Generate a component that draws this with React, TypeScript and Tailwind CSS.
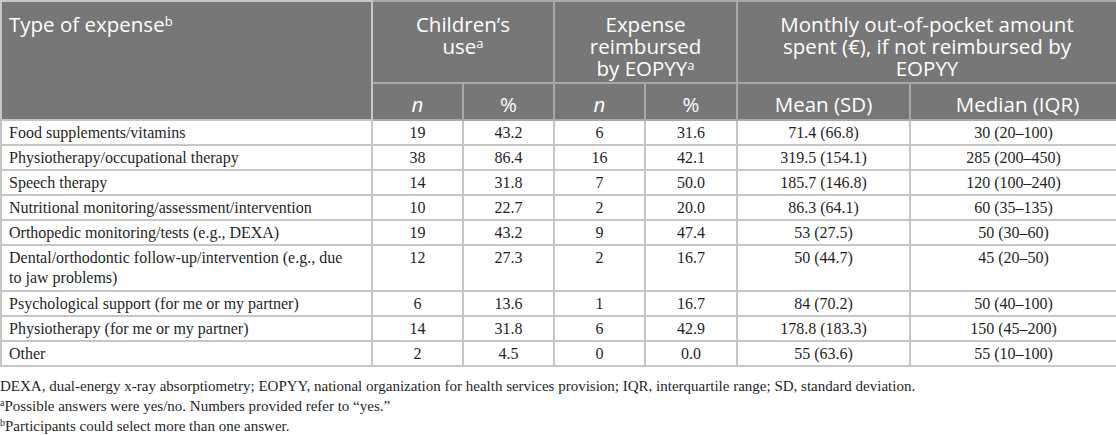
import React from "react";

type Row = {
  label: React.ReactNode;
  n1: string;
  p1: string;
  n2: string;
  p2: string;
  mean: string;
  median: string;
  tall?: boolean;
};

const ROWS: Row[] = [
  { label: "Food supplements/vitamins", n1: "19", p1: "43.2", n2: "6", p2: "31.6", mean: "71.4 (66.8)", median: "30 (20–100)" },
  { label: "Physiotherapy/occupational therapy", n1: "38", p1: "86.4", n2: "16", p2: "42.1", mean: "319.5 (154.1)", median: "285 (200–450)" },
  { label: "Speech therapy", n1: "14", p1: "31.8", n2: "7", p2: "50.0", mean: "185.7 (146.8)", median: "120 (100–240)" },
  { label: "Nutritional monitoring/assessment/intervention", n1: "10", p1: "22.7", n2: "2", p2: "20.0", mean: "86.3 (64.1)", median: "60 (35–135)" },
  { label: "Orthopedic monitoring/tests (e.g., DEXA)", n1: "19", p1: "43.2", n2: "9", p2: "47.4", mean: "53 (27.5)", median: "50 (30–60)" },
  {
    label: (
      <>
        Dental/orthodontic follow-up/intervention (e.g., due
        <br />
        to jaw problems)
      </>
    ),
    n1: "12",
    p1: "27.3",
    n2: "2",
    p2: "16.7",
    mean: "50 (44.7)",
    median: "45 (20–50)",
    tall: true,
  },
  { label: "Psychological support (for me or my partner)", n1: "6", p1: "13.6", n2: "1", p2: "16.7", mean: "84 (70.2)", median: "50 (40–100)" },
  { label: "Physiotherapy (for me or my partner)", n1: "14", p1: "31.8", n2: "6", p2: "42.9", mean: "178.8 (183.3)", median: "150 (45–200)" },
  { label: "Other", n1: "2", p1: "4.5", n2: "0", p2: "0.0", mean: "55 (63.6)", median: "55 (10–100)" },
];

const th = "border-2 border-[#a9a9a9] bg-[#777777] text-white font-normal";
const td = "border-2 border-[#c6c6c6] text-center align-top pt-[2px]";

export default function App() {
  return (
    <div className="w-[1116px] h-[435px] bg-white overflow-hidden text-[#1f1f1f] font-['Liberation_Serif','DejaVu_Serif',serif]">
      <table className="w-[1116px] table-fixed border-collapse border-2 border-[#c6c6c6]">
        <colgroup>
          <col className="w-[371px]" />
          <col className="w-[91px]" />
          <col className="w-[91px]" />
          <col className="w-[91px]" />
          <col className="w-[92px]" />
          <col className="w-[173px]" />
          <col className="w-[207px]" />
        </colgroup>
        <thead className="text-[20.5px] leading-[22px] font-['Open_Sans','Noto_Sans',sans-serif]">
          <tr className="h-[82px]">
            <th rowSpan={2} className={`${th} text-left align-top pl-[7px] pt-[11px] border-[#c6c6c6]`}>
              Type of expense<sup className="text-[13px]">b</sup>
            </th>
            <th colSpan={2} className={`${th} align-top pt-[11px] px-2`}>
              Children’s
              <br />
              use<sup className="text-[13px]">a</sup>
            </th>
            <th colSpan={2} className={`${th} align-top pt-[11px] px-2`}>
              Expense
              <br />
              reimbursed
              <br />
              by EOPYY<sup className="text-[13px]">a</sup>
            </th>
            <th colSpan={2} className={`${th} align-top pt-[11px] px-6`}>
              Monthly out-of-pocket amount spent (€), if not reimbursed by EOPYY
            </th>
          </tr>
          <tr className="h-[37px]">
            <th className={`${th} italic align-bottom pb-[4px]`}>n</th>
            <th className={`${th} align-bottom pb-[4px]`}>%</th>
            <th className={`${th} italic align-bottom pb-[4px]`}>n</th>
            <th className={`${th} align-bottom pb-[4px]`}>%</th>
            <th className={`${th} align-bottom pb-[4px]`}>Mean (SD)</th>
            <th className={`${th} align-bottom pb-[4px] pl-2`}>Median (IQR)</th>
          </tr>
        </thead>
        <tbody className="text-[16px] leading-[20px]">
          {ROWS.map((r, i) => (
            <tr key={i} className={r.tall ? "h-[46px]" : "h-[25px]"}>
              <td className="border-2 border-[#c6c6c6] text-left align-top pt-[2px] pl-[7px]">{r.label}</td>
              <td className={td}>{r.n1}</td>
              <td className={td}>{r.p1}</td>
              <td className={td}>{r.n2}</td>
              <td className={td}>{r.p2}</td>
              <td className={td}>{r.mean}</td>
              <td className={td}>{r.median}</td>
            </tr>
          ))}
        </tbody>
      </table>
      <div className="mt-[9px] text-[15px] leading-[20px]">
        <p>
          DEXA, dual-energy x-ray absorptiometry; EOPYY, national organization for health services provision; IQR,
          interquartile range; SD, standard deviation.
        </p>
        <p>
          <sup className="text-[10px]">a</sup>Possible answers were yes/no. Numbers provided refer to “yes.”
        </p>
        <p>
          <sup className="text-[10px]">b</sup>Participants could select more than one answer.
        </p>
      </div>
    </div>
  );
}
